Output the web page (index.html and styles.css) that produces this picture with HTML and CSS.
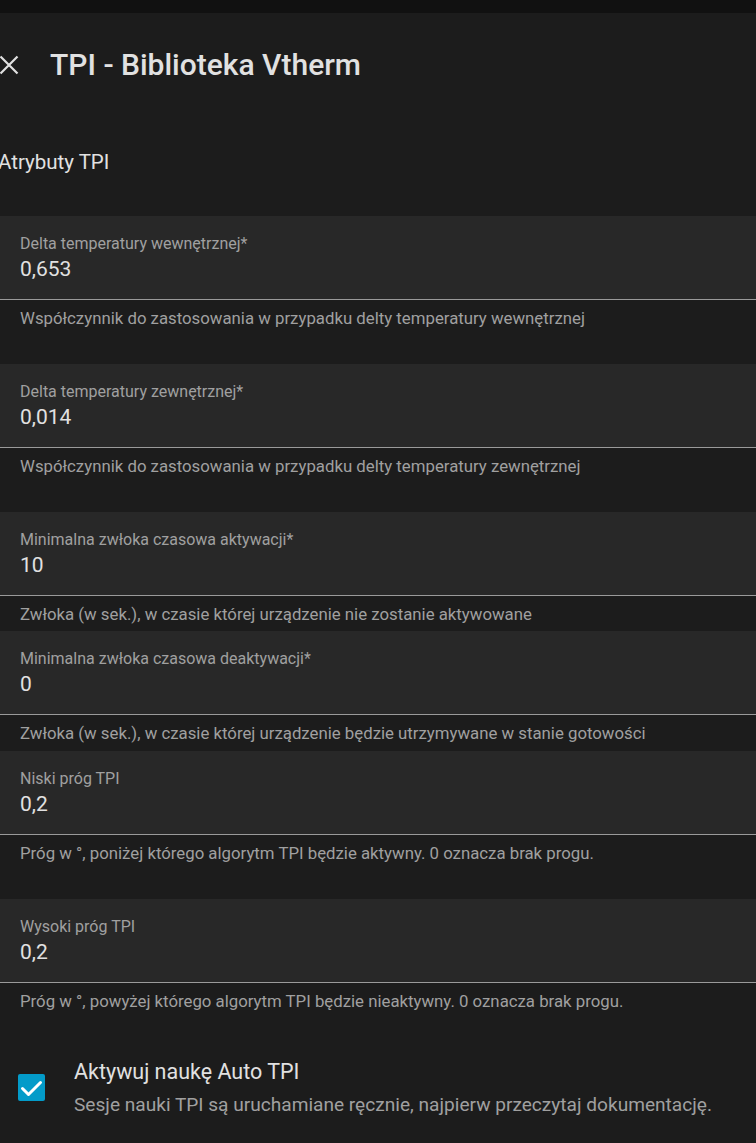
FILE: index.html
```html
<!DOCTYPE html>
<html lang="pl">
<head>
<meta charset="utf-8">
<title>TPI - Biblioteka Vtherm</title>
<link rel="stylesheet" href="styles.css">
</head>
<body>
<div class="topstrip"></div>
<header class="header">
  <svg class="close" width="20" height="20" viewBox="0 0 20 20" aria-hidden="true">
    <path d="M1.5 1.5 L18.5 18.5 M18.5 1.5 L1.5 18.5" stroke="#e1e1e1" stroke-width="2.2" fill="none"/>
  </svg>
  <h1 class="title">TPI - Biblioteka Vtherm</h1>
</header>
<h2 class="section">Atrybuty TPI</h2>

<div class="field">
  <div class="field-box">
    <div class="label">Delta temperatury wewnętrznej*</div>
    <div class="value">0,653</div>
  </div>
  <div class="helper helper-wide">Współczynnik do zastosowania w przypadku delty temperatury wewnętrznej</div>
</div>

<div class="field">
  <div class="field-box">
    <div class="label">Delta temperatury zewnętrznej*</div>
    <div class="value">0,014</div>
  </div>
  <div class="helper helper-wide">Współczynnik do zastosowania w przypadku delty temperatury zewnętrznej</div>
</div>

<div class="field">
  <div class="field-box">
    <div class="label">Minimalna zwłoka czasowa aktywacji*</div>
    <div class="value">10</div>
  </div>
  <div class="helper">Zwłoka (w sek.), w czasie której urządzenie nie zostanie aktywowane</div>
</div>

<div class="field">
  <div class="field-box">
    <div class="label">Minimalna zwłoka czasowa deaktywacji*</div>
    <div class="value">0</div>
  </div>
  <div class="helper helper-tall">Zwłoka (w sek.), w czasie której urządzenie będzie utrzymywane w stanie gotowości</div>
</div>

<div class="field">
  <div class="field-box">
    <div class="label">Niski próg TPI</div>
    <div class="value">0,2</div>
  </div>
  <div class="helper helper-wide">Próg w °, poniżej którego algorytm TPI będzie aktywny. 0 oznacza brak progu.</div>
</div>

<div class="field">
  <div class="field-box">
    <div class="label">Wysoki próg TPI</div>
    <div class="value">0,2</div>
  </div>
  <div class="helper helper-last">Próg w °, powyżej którego algorytm TPI będzie nieaktywny. 0 oznacza brak progu.</div>
</div>

<div class="check-row">
  <div class="checkbox">
    <svg width="27" height="27" viewBox="0 0 27 27" aria-hidden="true">
      <path d="M4.5 14.5 L10.5 20.5 L22.5 8.5" stroke="#ffffff" stroke-width="3" fill="none" stroke-linecap="round" stroke-linejoin="round"/>
    </svg>
  </div>
  <div class="check-text">
    <div class="check-title">Aktywuj naukę Auto TPI</div>
    <div class="check-desc">Sesje nauki TPI są uruchamiane ręcznie, najpierw przeczytaj dokumentację.</div>
  </div>
</div>
</body>
</html>
```

FILE: styles.css
```css
html, body {
  margin: 0;
  padding: 0;
  background: #1c1c1c;
  font-family: Roboto, "Noto Sans", "Liberation Sans", sans-serif;
  overflow: hidden;
}

.topstrip {
  height: 13px;
  background: #111111;
}

.header {
  height: 104px;
  display: flex;
  align-items: center;
  gap: 31px;
}

.close {
  display: block;
  margin-left: -1px;
  flex: none;
}

.title {
  margin: 0;
  font-size: 30px;
  line-height: 36px;
  font-weight: 500;
  color: #e1e1e1;
}

.section {
  margin: 33px 0 42px -2px;
  font-size: 20.5px;
  line-height: 24px;
  font-weight: 400;
  color: #e1e1e1;
}

.field-box {
  background: #282828;
  border-bottom: 1px solid #9a9a9a;
  padding: 18px 20px 18px;
  height: 47px;
}

.label {
  font-size: 16px;
  line-height: 20px;
  color: #a0a0a0;
}

.value {
  margin-top: 3px;
  font-size: 21px;
  line-height: 24px;
  color: #e1e1e1;
}

.helper {
  padding: 8px 20px 7px;
  font-size: 16.8px;
  line-height: 20px;
  color: #a0a0a0;
}

.helper-tall {
  padding-bottom: 8px;
}

.helper-wide {
  padding-bottom: 36px;
}

.helper-last {
  padding-bottom: 48px;
}

.check-row {
  display: flex;
  align-items: flex-start;
}

.checkbox {
  flex: none;
  width: 27px;
  height: 27px;
  margin: 15px 0 0 18px;
  background: #039bc9;
  border-radius: 2px;
}

.checkbox svg {
  display: block;
}

.check-text {
  margin-left: 29px;
}

.check-title {
  font-size: 21.5px;
  line-height: 26px;
  color: #e1e1e1;
}

.check-desc {
  margin-top: 8px;
  font-size: 19.1px;
  line-height: 24px;
  color: #a0a0a0;
}
```
